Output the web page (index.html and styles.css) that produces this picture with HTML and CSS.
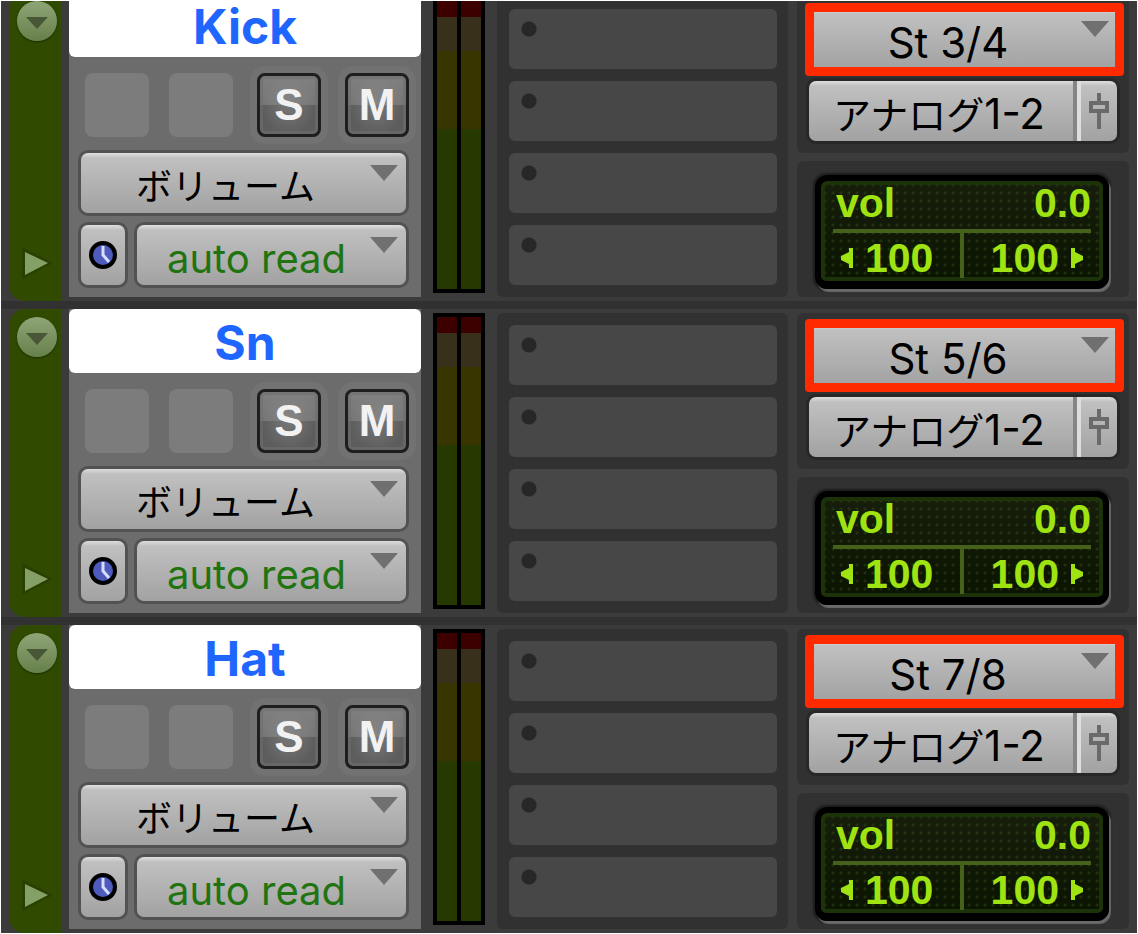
FILE: index.html
```html
<!DOCTYPE html>
<html lang="ja">
<head>
    <meta charset="UTF-8">
    <meta name="viewport" content="width=device-width, initial-scale=1.0">
    <title>トラック一覧</title>
    <link rel="stylesheet" href="styles.css">
</head>
<body>

<main id="mixer" class="mixer"></main>

<script>
    const tracks = [
        { name: 'Kick', input: 'St 3/4' },
        { name: 'Sn', input: 'St 5/6' },
        { name: 'Hat', input: 'St 7/8' }
    ];

    // 空のインサートスロット
    const slot = '<button class="slot" aria-label="インサート"></button>';

    // トラック1行分のHTML
    function trackRow(track) {
        return `
        <section class="track">
            <div class="strip">
                <button class="strip-menu" aria-label="${track.name} メニュー">
                    <svg width="40" height="40" viewBox="0 0 40 40"><path d="M9 16h22L20 28z" fill="#4a5638"/></svg>
                </button>
                <button class="strip-play" aria-label="${track.name} 展開">
                    <svg width="32" height="36" viewBox="0 0 32 36"><path d="M1 2L32 18L1 34z" fill="#294000"/><path d="M4 7L27 18L4 30z" fill="#85a066"/></svg>
                </button>
            </div>

            <div class="controls">
                <h2 class="track-name">${track.name}</h2>
                <div class="switches">
                    <span class="blank"></span>
                    <span class="blank"></span>
                    <button class="switch" aria-label="ソロ">S</button>
                    <button class="switch" aria-label="ミュート">M</button>
                </div>
                <div class="dropdown">
                    <select class="kana" aria-label="表示"><option>ボリューム</option></select>
                </div>
                <div class="automation">
                    <button class="clock" aria-label="タイムベース">
                        <svg width="28" height="28" viewBox="0 0 28 28">
                            <circle cx="14" cy="14" r="12" fill="#4d5cbc" stroke="#000" stroke-width="4"/>
                            <path d="M14 5v9l6 7" fill="none" stroke="#d8dcff" stroke-width="3"/>
                        </svg>
                    </button>
                    <div class="dropdown">
                        <select class="auto" aria-label="オートメーション"><option>auto read</option></select>
                    </div>
                </div>
            </div>

            <div class="meter">
                <span class="level"></span>
                <span class="level"></span>
            </div>

            <div class="inserts">${slot.repeat(4)}</div>

            <div class="io">
                <div class="io-panel routing">
                    <div class="dropdown marked">
                        <select aria-label="入力"><option>${track.input}</option></select>
                    </div>
                    <div class="output">
                        <button class="output-name"><span class="kana">アナログ</span>1-2</button>
                        <button class="output-fader" aria-label="フェーダー">
                            <svg width="20" height="36" viewBox="0 0 20 36" fill="none" stroke="#6a6a6a" stroke-width="4">
                                <path d="M10 0v10M10 19v17M2 10h16v8H2z"/>
                            </svg>
                        </button>
                    </div>
                </div>
                <div class="io-panel">
                    <div class="lcd">
                        <div class="lcd-row volume"><span>vol</span><span>0.0</span></div>
                        <div class="lcd-row pan">
                            <span class="pan-left"><svg width="12" height="20" viewBox="0 0 12 20"><path d="M12 0v20H8v-4L0 12V8l8-4V0z"/></svg>100</span>
                            <span class="pan-right">100<svg width="12" height="20" viewBox="0 0 12 20"><path d="M0 0v20h4v-4l8-4V8L4 4V0z"/></svg></span>
                        </div>
                    </div>
                </div>
            </div>
        </section>`;
    }

    document.getElementById('mixer').innerHTML = tracks.map(trackRow).join('');
</script>

</body>
</html>
```

FILE: styles.css
```css
* {
    box-sizing: border-box;
}

body {
    margin: 0;
    padding: 1px;
    background-color: #ffffff;
    font-family: Inter, "Noto Sans CJK JP", sans-serif;
}

button,
select {
    margin: 0;
    padding: 0;
    border: none;
    background: none;
    font: inherit;
    color: #000000;
    cursor: pointer;
}

svg {
    display: block;
}

.mixer {
    display: flex;
    flex-direction: column;
    justify-content: flex-end;
    gap: 8px;
    height: calc(100vh - 2px);
    overflow: hidden;
    background-color: #313132;
}

/* トラック行 */
.track {
    flex: none;
    display: grid;
    grid-template-columns: 52px 352px 52px 1fr 332px;
    height: 308px;
    padding: 0 8px;
    background-color: #3b3b3b;
}

/* 左の色帯 */
.strip {
    display: flex;
    flex-direction: column;
    justify-content: space-between;
    align-items: center;
    padding: 8px 0 20px 4px;
    border-radius: 16px 0 0 16px;
    background-color: #304a00;
}

.strip-menu {
    border-radius: 50%;
    background: linear-gradient(#8fa577, #66804a);
    box-shadow: 0 1px 2px #1c2c00;
}

/* 名前とボタン */
.controls {
    width: 352px;
    height: 304px;
    margin-left: 8px;
    background-color: #6c6c6c;
}

.track-name {
    height: 64px;
    margin: 0;
    border-radius: 6px;
    background-color: #ffffff;
    color: #1f66ff;
    font-size: 48px;
    font-weight: 700;
    line-height: 68px;
    text-align: center;
}

.switches {
    display: flex;
    gap: 24px;
    padding: 16px 12px 16px 16px;
}

.blank,
.switch {
    width: 64px;
    height: 64px;
    border-radius: 8px;
}

.blank {
    background-color: #7c7c7c;
}

.blank + .blank {
    margin-left: -4px;
}

.switch {
    border: 3px solid #1e1e1e;
    background: radial-gradient(rgba(150, 150, 150, 0.5), transparent 70%), linear-gradient(#808080, #747474 50%, #5a5a5a 50%, #5e5e5e);
    box-shadow: 0 0 0 7px #727272, inset 0 0 0 3px rgba(110, 110, 110, 0.6);
    color: #f2f2f2;
    font-family: "Liberation Sans", sans-serif;
    font-size: 44px;
    font-weight: 700;
    line-height: 58px;
}

.controls > .dropdown,
.automation {
    margin: 0 15px 12px 12px;
}

.automation {
    display: flex;
    gap: 12px;
}

/* グレーのボタン共通 */
.dropdown,
.clock,
.output {
    height: 60px;
    border-radius: 7px;
    background: linear-gradient(#dddddd, #c0c0c0 5px, #a2a2a2);
    box-shadow: 0 0 0 3px #525252;
}

.dropdown {
    position: relative;
    flex: 1;
}

.dropdown select {
    width: 100%;
    height: 60px;
    padding: 8px 30px 0 0;
    appearance: none;
    font-size: 42px;
    line-height: 52px;
    text-align-last: center;
}

.dropdown::before {
    content: "";
    position: absolute;
    top: 12px;
    right: 8px;
    width: 28px;
    height: 16px;
    background-color: #707070;
    clip-path: polygon(0 0, 100% 0, 50% 100%);
    pointer-events: none;
}

.kana {
    font-family: "Noto Sans CJK JP", sans-serif;
    font-size: 38px;
}

.dropdown select.kana {
    padding: 2px 36px 0 0;
    font-size: 36px;
}

.dropdown select.auto {
    color: #1f7410;
    font-size: 40px;
}

.clock {
    width: 44px;
}

.clock svg {
    margin: 0 auto;
}

/* レベルメーター */
.meter {
    display: flex;
    gap: 4px;
    height: 296px;
    margin: 4px -20px 0 20px;
    padding: 4px;
    background-color: #000000;
}

.level {
    flex: 1;
    background: linear-gradient(#3c0000 16px, #39301c 16px, #39301c 50px, #393500 50px, #393500 128px, #263900 128px);
}

/* インサート */
.inserts {
    display: flex;
    flex-direction: column;
    gap: 12px;
    height: 300px;
    margin: 4px 9px 0 32px;
    padding: 12px 11px 12px 12px;
    border-radius: 6px;
    background-color: #313131;
}

.slot {
    height: 60px;
    border-radius: 6px;
    background: radial-gradient(circle at 20px 20px, #272727 7px, #474747 8px);
}

/* 入出力 */
.io {
    display: flex;
    flex-direction: column;
    gap: 8px;
    padding: 4px 0;
}

.io-panel {
    border-radius: 6px;
    background-color: #313131;
}

.routing {
    display: flex;
    flex-direction: column;
    gap: 12px;
    height: 156px;
    padding: 12px;
}

.routing .dropdown,
.output {
    flex: none;
    box-shadow: 0 0 0 3px #272727;
}

.marked::after {
    content: "";
    position: absolute;
    inset: -6px -7px -7px -4px;
    border: 9px solid #ff2a00;
    border-radius: 4px;
    pointer-events: none;
}

.output {
    display: flex;
}

.output-name {
    flex: 1;
    padding: 4px 4px 0 0;
    border-right: 4px solid #858585;
    font-size: 42px;
    line-height: 56px;
    white-space: nowrap;
}

.output-fader {
    width: 40px;
    padding-left: 8px;
    border-left: 4px solid #dedede;
}

/* 音量とパンの表示 */
.lcd {
    display: flex;
    flex-direction: column;
    margin: 14px 20px 8px 18px;
    padding: 0 12px;
    border: 6px solid #000000;
    border-bottom-width: 8px;
    border-radius: 12px;
    background: radial-gradient(circle, rgba(60, 85, 30, 0.4) 1px, transparent 2px) 0 0 / 8px 8px, linear-gradient(#171e0c, #0a1400);
    box-shadow: 2px 3px 1px #6a6a6a, 0 0 2px 2px #1c1c1c, inset 0 0 0 4px #1c3208;
    color: #9fe312;
    font-family: "Liberation Sans", sans-serif;
    font-size: 41px;
    font-weight: 700;
    line-height: 44px;
}

.lcd-row {
    display: flex;
    justify-content: space-between;
}

.volume {
    height: 52px;
    padding: 0 0 0 3px;
    border-bottom: 4px solid #46621a;
}

.pan {
    height: 48px;
}

.pan span {
    display: flex;
    align-items: center;
    gap: 12px;
    height: 45px;
    padding: 4px 8px 0;
}

.pan svg {
    fill: #9fe312;
}

.pan .pan-left {
    flex: 1;
    border-right: 4px solid #46621a;
}

.pan .pan-right {
    flex: 1;
    justify-content: flex-end;
}
```
